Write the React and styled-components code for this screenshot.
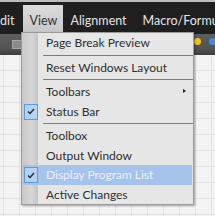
import React from "react";
import styled, { createGlobalStyle } from "styled-components";

const Global = createGlobalStyle`
  html, body { margin: 0; padding: 0; }
  body { width: 215px; height: 216px; overflow: hidden; font-family: Lato, "Noto Sans", sans-serif; }
`;

const Screen = styled.div`
  position: relative;
  width: 215px;
  height: 216px;
  overflow: hidden;
  display: flex;
  flex-direction: column;
  background-color: #f3f3f3;
  background-image:
    linear-gradient(#e3e3e3 1px, transparent 1px),
    linear-gradient(90deg, #e3e3e3 1px, transparent 1px);
  background-size: 16px 16px;
  background-position: 3px 6px;
`;

const TopEdge = styled.div`
  height: 2px;
  background: #bdbdbd;
`;

const MenuBar = styled.div`
  height: 32px;
  background: #1f1f1f;
  display: flex;
  align-items: stretch;
`;

const MenuTitle = styled.div`
  flex-shrink: 0;
  display: flex;
  align-items: center;
  padding: 4px ${(p) => p.$right ?? 8}px 0 ${(p) => p.$left ?? 8}px;
  font-size: 12.5px;
  color: #e4e4e4;
  white-space: nowrap;
`;

const ActiveTitle = styled.div`
  flex-shrink: 0;
  width: 40px;
  margin-top: 3px;
  padding-top: 1px;
  display: flex;
  align-items: center;
  justify-content: center;
  font-size: 12.5px;
  color: #333;
  background: linear-gradient(#dcdcdc, #c6c6c6);
`;

const ToolStrip = styled.div`
  height: 21px;
  background: linear-gradient(#5e5e5e, #525252 70%, #3c3c3c);
  display: flex;
  align-items: center;
  justify-content: space-between;
  padding: 0 0 0 10px;
`;

const Dot = styled.span`
  display: inline-block;
  width: 7px;
  height: 7px;
  border-radius: 50%;
  background: ${(p) => p.$c};
`;

const Icons = styled.div`
  display: flex;
  align-items: center;
  gap: 8px;
  margin-right: -1px;
  margin-top: -7px;
`;

const SmallBox = styled.span`
  width: 8px;
  height: 7px;
  margin-left: 2px;
  background: #8a8a8a;
  border: 1px solid #a5a5a5;
`;

const Menu = styled.div`
  position: absolute;
  left: 21px;
  top: 32px;
  width: 171px;
  background: #e6e6e6;
  border: 1px solid #9a9a9a;
  box-shadow: 1px 1px 2px rgba(0,0,0,0.35);
  display: flex;
  flex-direction: column;
  &::before {
    content: "";
    position: absolute;
    left: 0;
    top: 0;
    bottom: 0;
    width: 16px;
    background: linear-gradient(90deg, #c9c9c9, #d6d6d6 60%, #c4c4c4);
  }
`;

const Item = styled.div`
  position: relative;
  height: 19.5px;
  display: flex;
  align-items: center;
  font-size: 12px;
  color: ${(p) => (p.$hl ? "#eaf0f9" : "#2e2e2e")};
  background: ${(p) => (p.$hl ? "#a6c3ec" : "transparent")};
  margin: 0 ${(p) => (p.$hl ? 1 : 0)}px 0 1px;
  padding-left: 23px;
  white-space: nowrap;
`;

const Sep = styled.div`
  position: relative;
  height: 5px;
  display: flex;
  align-items: center;
  padding-left: 21px;
  &::after {
    content: "";
    flex: 1;
    height: 1px;
    background: #7c7c7c;
  }
`;

const Check = styled.span`
  position: absolute;
  left: 1px;
  top: 2px;
  width: 12px;
  height: 14px;
  border: 1px solid #5b9be0;
  background: #b6d2f2;
  display: flex;
  align-items: center;
  justify-content: center;
`;

const Arrow = styled.span`
  position: absolute;
  right: 7px;
  top: 7px;
  width: 0;
  height: 0;
  border-top: 2.5px solid transparent;
  border-bottom: 2.5px solid transparent;
  border-left: 3px solid #222;
`;

const CheckMark = () => (
  <svg width="8" height="7" viewBox="0 0 8 7">
    <path d="M1 3.5 L3 5.5 L7 1" fill="none" stroke="#2a2a2a" strokeWidth="1.4" />
  </svg>
);

export default function App() {
  return (
    <>
      <Global />
      <Screen>
        <TopEdge />
        <MenuBar>
          <MenuTitle $left={0} $right={9}>dit</MenuTitle>
          <ActiveTitle>View</ActiveTitle>
          <MenuTitle $left={7}>Alignment</MenuTitle>
          <MenuTitle>Macro/Formula</MenuTitle>
        </MenuBar>
        <ToolStrip>
          <SmallBox />
          <Icons>
            <Dot $c="#f2c21a" />
            <Dot $c="#3a8fe8" />
          </Icons>
        </ToolStrip>
        <Menu>
          <Item>Page Break Preview</Item>
          <Sep />
          <Item>Reset Windows Layout</Item>
          <Sep />
          <Item>Toolbars<Arrow /></Item>
          <Item><Check><CheckMark /></Check>Status Bar</Item>
          <Sep />
          <Item>Toolbox</Item>
          <Item>Output Window</Item>
          <Item $hl><Check><CheckMark /></Check>Display Program List</Item>
          <Item>Active Changes</Item>
        </Menu>
      </Screen>
    </>
  );
}
